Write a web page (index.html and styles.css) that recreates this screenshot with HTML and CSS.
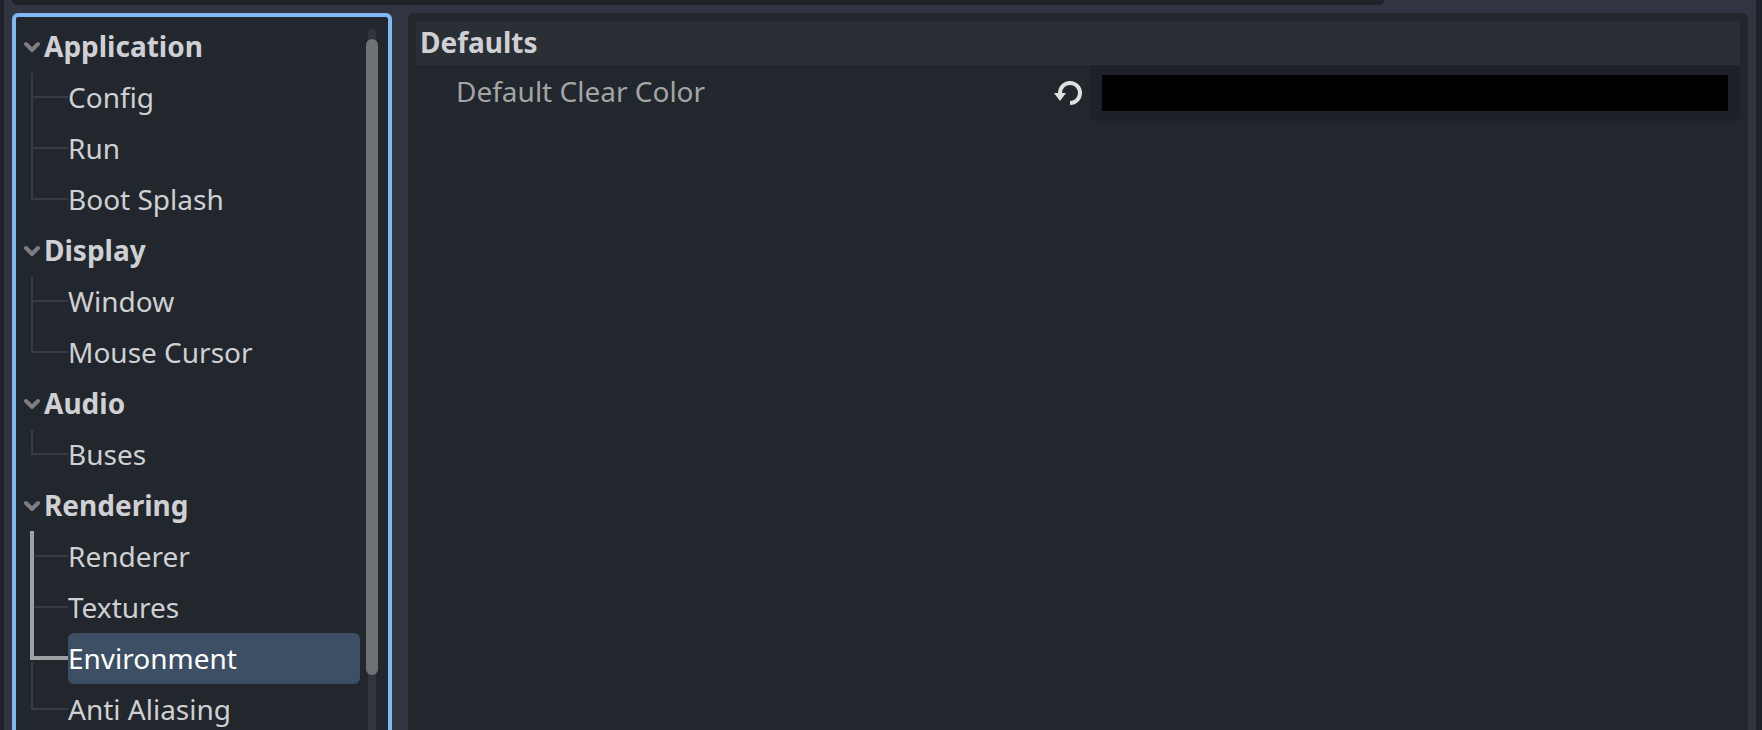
FILE: index.html
```html
<!DOCTYPE html>
<html lang="en">
<head>
<meta charset="utf-8">
<title>Project Settings</title>
<link rel="stylesheet" href="styles.css">
</head>
<body>
<svg class="symbols" aria-hidden="true">
  <symbol id="chevron" viewBox="0 0 16 16"><path d="M2 5l6 6 6-6" fill="none" stroke="currentColor" stroke-width="4" stroke-linecap="round" stroke-linejoin="round"/></symbol>
</svg>
<div class="app">
  <div class="toolbar"><div class="filter-edge"></div></div>
  <main class="content">
    <nav class="sidebar" aria-label="Sections">
      <ul class="tree">
        <li>
          <button class="group"><svg class="chevron"><use href="#chevron"/></svg>Application</button>
          <ul class="children">
            <li class="child"><button class="item">Config</button></li>
            <li class="child"><button class="item">Run</button></li>
            <li class="child"><button class="item">Boot Splash</button></li>
          </ul>
        </li>
        <li>
          <button class="group"><svg class="chevron"><use href="#chevron"/></svg>Display</button>
          <ul class="children">
            <li class="child"><button class="item">Window</button></li>
            <li class="child"><button class="item">Mouse Cursor</button></li>
          </ul>
        </li>
        <li>
          <button class="group"><svg class="chevron"><use href="#chevron"/></svg>Audio</button>
          <ul class="children">
            <li class="child"><button class="item">Buses</button></li>
          </ul>
        </li>
        <li>
          <button class="group"><svg class="chevron"><use href="#chevron"/></svg>Rendering</button>
          <ul class="children">
            <li class="child on-path"><button class="item">Renderer</button></li>
            <li class="child on-path"><button class="item">Textures</button></li>
            <li class="child current"><button class="item" aria-current="page">Environment</button></li>
            <li class="child"><button class="item">Anti Aliasing</button></li>
          </ul>
        </li>
      </ul>
      <div class="scrollbar"><div class="track"></div><div class="thumb"></div></div>
    </nav>
    <section class="inspector">
      <h2 class="category">Defaults</h2>
      <div class="property">
        <label class="property-name" for="clear-color">Default Clear Color</label>
        <button class="revert" aria-label="Reset to default">
          <svg class="revert-icon" viewBox="0 0 32 32"><path d="M6 17v-1a10 10 0 1 1 10 10" fill="none" stroke="currentColor" stroke-width="4"/><path d="M0 16h12l-6 8z" fill="currentColor"/></svg>
        </button>
        <div class="color-field"><input class="color" id="clear-color" type="color" value="#000000"></div>
      </div>
    </section>
  </main>
</div>
</body>
</html>
```

FILE: styles.css
```css
*,
*::before,
*::after {
  box-sizing: border-box;
}

body {
  margin: 0;
  background: #1e2127;
  color: #cfd0d3;
  font-family: "Noto Sans", sans-serif;
  font-size: 28px;
}

ul {
  margin: 0;
  padding: 0;
  list-style: none;
}

button {
  padding: 0;
  border: 0;
  background: none;
  color: inherit;
  font: inherit;
  text-align: left;
}

.symbols {
  display: none;
}

.app {
  display: flex;
  flex-direction: column;
  height: 100vh;
  margin: 0 6px 0 4px;
  padding: 0 8px;
  overflow: hidden;
  background: #303541;
}

.toolbar {
  flex: none;
  padding-right: 364px;
}

.filter-edge {
  height: 5px;
  border: solid #1e2128;
  border-width: 0 4px 4px;
  border-radius: 0 0 6px 6px;
  background: #23272e;
}

.content {
  display: flex;
  flex: 1;
  gap: 16px;
  min-height: 0;
  margin-top: 8px;
}

.sidebar {
  display: flex;
  flex: none;
  gap: 6px;
  width: 380px;
  padding: 4px 10px 0 0;
  overflow: hidden;
  border: 4px solid #80b8f5;
  border-bottom: 0;
  border-radius: 6px 6px 0 0;
  background: #22262d;
}

.tree {
  flex: 1;
}

.group {
  display: flex;
  align-items: center;
  gap: 4px;
  width: 100%;
  height: 51px;
  padding: 0 0 2px 8px;
  font-weight: 700;
}

.chevron {
  width: 16px;
  height: 16px;
  margin-top: 2px;
  color: #7c7e82;
}

.child {
  position: relative;
  padding-left: 52px;
}

.item {
  display: block;
  width: 100%;
  height: 51px;
  padding-bottom: 2px;
  border-radius: 6px;
}

.child::before,
.child::after {
  content: "";
  position: absolute;
  left: 15px;
  background: #373b43;
}

.child::before {
  top: 0;
  width: 2px;
  height: 51px;
}

.child::after {
  top: 24px;
  width: 37px;
  height: 2px;
}

.child:first-child::before {
  top: 1px;
  height: 50px;
}

.child:last-child::before {
  height: 25px;
}

.child.on-path::before {
  top: 0;
  left: 14px;
  width: 4px;
  height: 51px;
  background: #9fa0a3;
}

.child.on-path::after {
  left: 19px;
  width: 33px;
}

.child.current::before {
  left: 14px;
  width: 38px;
  height: 27px;
  border: solid #9fa0a3;
  border-width: 0 0 4px 4px;
  background: none;
}

.child.current::after {
  top: 29px;
  width: 2px;
  height: 22px;
}

.current .item {
  background: #3d4f65;
  color: #fff;
}

.scrollbar {
  display: grid;
  justify-items: center;
  width: 12px;
  padding-top: 8px;
}

.track,
.thumb {
  grid-area: 1 / 1;
}

.track {
  width: 8px;
  border-radius: 4px 4px 0 0;
  background: #32353d;
}

.thumb {
  width: 12px;
  height: 636px;
  margin-top: 10px;
  border-radius: 6px;
  background: #707175;
}

.inspector {
  flex: 1;
  padding: 8px;
  border-radius: 6px 6px 0 0;
  background: #22262d;
}

.category {
  height: 44px;
  margin: 0;
  padding-left: 4px;
  background: #2a2e35;
  font-size: 28px;
  font-weight: 700;
  line-height: 42px;
}

.property {
  display: flex;
  height: 56px;
}

.property-name {
  flex: 1;
  padding-left: 40px;
  color: #a3a4a5;
  line-height: 52px;
}

.revert {
  display: flex;
  align-items: center;
  margin-right: 4px;
}

.revert-icon {
  width: 32px;
  height: 32px;
  color: #e0e0e0;
}

.color-field {
  flex: 0 0 calc(50% - 12px);
  padding: 10px 12px;
  border-radius: 6px;
  background: #1e2128;
}

.color {
  display: block;
  width: 100%;
  height: 36px;
  padding: 0;
  border: 0;
  background: none;
  appearance: none;
}

.color::-webkit-color-swatch-wrapper {
  padding: 0;
}

.color::-webkit-color-swatch {
  border: 0;
}
```
